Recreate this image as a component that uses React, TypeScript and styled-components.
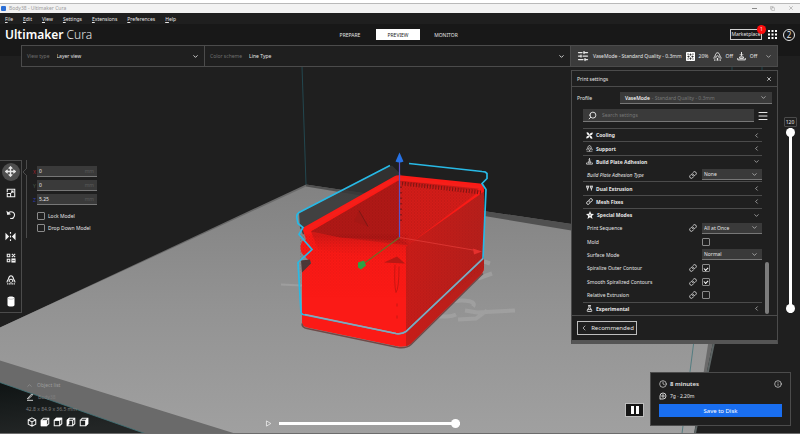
import React, { useState } from "react";
import styled, { createGlobalStyle, css } from "styled-components";
import { ChevronDown, ChevronLeft, ChevronUp, Clock, Copy, FlaskConical, Info, Link, Menu, Move, Search, SlidersHorizontal, X } from "lucide-react";

const c = {
  bg: "#1f1f1f",
  header: "#181818",
  line: "#4b4b4b",
  field: "#3a3a3a",
  fieldLine: "#777777",
  text: "#e6e6e6",
  muted: "#707070",
  blue: "#196ef0",
};

const GlobalStyle = createGlobalStyle`
  * { box-sizing: border-box; }
  body { margin: 0; background: ${c.bg}; }
  body, button, input, select {
    font-family: "Noto Sans", "Open Sans", sans-serif;
    font-size: 5px;
    line-height: 8px;
    color: ${c.text};
  }
  button { background: none; border: 0; padding: 0; margin: 0; cursor: pointer; }
  input, select { margin: 0; min-width: 0; }
  svg { display: block; flex: none; }
`;

const Page = styled.div`
  min-height: 100vh;
  display: flex;
  flex-direction: column;
  background: ${c.bg};
  border-bottom: 1px solid #6c6c6c;
`;

/* window chrome */
const TitleBar = styled.div`
  height: 13px;
  display: flex;
  align-items: center;
  gap: 3px;
  padding: 3px 6px 0 1px;
  background: linear-gradient(#ffffff 3px, #b9b9b9 3px, #b9b9b9 4px, #f2f2f2 4px);
  color: #9b9b9b;
`;
const AppBadge = styled.span`
  width: 5px;
  height: 5px;
  border-radius: 1px;
  background: #2b6fd6;
`;
const WindowButtons = styled.div`
  margin-left: auto;
  display: flex;
  gap: 13px;
  button { color: #8a8a8a; }
`;
const MenuBar = styled.nav`
  height: 11px;
  display: flex;
  align-items: center;
  gap: 10px;
  padding: 0 5px;
  button::first-letter { text-decoration: underline; }
`;
const Header = styled.header`
  display: grid;
  grid-template-columns: 1fr auto 1fr;
  align-items: center;
  height: 32px;
  padding: 0 5px 11px 1px;
  background: ${c.header};
`;
const Brand = styled.div`
  padding-left: 4px;
  font-size: 12px;
  line-height: 16px;
  font-weight: 300;
  strong { font-weight: 600; color: #fff; }
`;
const Tabs = styled.nav`
  display: flex;
  gap: 4px;
`;
const Tab = styled.button<{ $active?: boolean }>`
  width: 44px;
  height: 11px;
  ${(p) => p.$active && css`background: #fff; color: #222;`}
`;
const HeaderTools = styled.div`
  display: flex;
  justify-content: flex-end;
  align-items: center;
  gap: 6px;
`;
const Marketplace = styled.button`
  position: relative;
  height: 11px;
  width: 32px;
  border: 1px solid #d0d0d0;
  line-height: 9px;
  white-space: nowrap;
`;
const Count = styled.span`
  position: absolute;
  top: -5px;
  right: -5px;
  width: 9px;
  height: 9px;
  border-radius: 50%;
  background: #ff0d0d;
`;
const Account = styled.button`
  width: 12px;
  height: 12px;
  border: 1px solid #e6e6e6;
  border-radius: 50%;
  font-size: 8px;
  line-height: 10px;
`;

/* stage */
const Stage = styled.main`
  position: relative;
  flex: 1;
  display: flex;
  flex-direction: column;
`;
const Scene = styled.svg`
  position: absolute;
  inset: 0;
  width: 100%;
  height: 100%;
`;
const StageBar = styled.div`
  position: relative;
  display: flex;
  height: 22px;
  margin: -11px 22px 0 21px;
  border: 1px solid ${c.line};
  background: ${c.bg};
`;
const BarField = styled.label<{ $wide?: boolean }>`
  flex: ${(p) => (p.$wide ? "1" : "0 0 183px")};
  display: flex;
  align-items: center;
  gap: 7px;
  padding: 0 5px;
  color: ${c.muted};
  border-right: 1px solid ${c.line};
  white-space: nowrap;
`;
const PlainSelect = styled.select`
  flex: 1;
  appearance: none;
  border: 0;
  padding: 0;
  background: none;
`;
const Summary = styled.button`
  flex: 0 0 206px;
  display: flex;
  align-items: center;
  gap: 4px;
  padding: 0 5px 0 6px;
  background: #3b3b3b;
  white-space: nowrap;
  svg:last-child { margin-left: auto; }
`;
const Body = styled.div`
  position: relative;
  flex: 1;
  display: flex;
  flex-direction: column;
  justify-content: space-between;
`;
const Row = styled.div`
  display: flex;
  align-items: flex-start;
  padding: 3px 3px 0 0;
`;

/* tools */
const Toolbar = styled.div`
  margin-top: 90px;
  width: 22px;
  height: 153px;
  display: flex;
  flex-direction: column;
  border: 1px solid ${c.line};
  border-left: 0;
  background: ${c.bg};
`;
const Tool = styled.button<{ $active?: boolean }>`
  flex: 1;
  display: grid;
  place-items: center;
  span {
    display: grid;
    place-items: center;
    width: 18px;
    height: 18px;
    border-radius: 50%;
    background: ${(p) => (p.$active ? "#4e4e4e" : "none")};
  }
`;
const ToolPanel = styled.form`
  position: relative;
  margin: 90px 0 0 4px;
  padding: 6px 0 6px 6px;
  border-left: 1px solid ${c.line};
  display: flex;
  flex-direction: column;
  gap: 3px;
`;
const Pointer = styled.svg`
  position: absolute;
  left: -5px;
  top: 8px;
`;
const Axis = styled.label<{ $color: string }>`
  display: flex;
  align-items: center;
  color: ${(p) => p.$color};
  gap: 1px;
  > b { width: 3px; font-weight: 400; }
`;
const AxisField = styled.span`
  display: flex;
  align-items: center;
  width: 60px;
  height: 11px;
  padding: 0 3px 0 2px;
  background: ${c.field};
  border-bottom: 1px solid ${c.fieldLine};
  color: #5a5a5a;
  input { flex: 1; border: 0; padding: 0; background: none; }
`;
const Checks = styled.div`
  display: flex;
  flex-direction: column;
  gap: 4px;
  padding: 4px 0 0 4px;
`;
const CheckLabel = styled.label`
  display: flex;
  align-items: center;
  gap: 3px;
`;
const Check = styled.input`
  appearance: none;
  display: grid;
  place-items: center;
  width: 8px;
  height: 8px;
  border: 1px solid #8a8a8a;
  border-radius: 1px;
  &:checked::after {
    content: "";
    width: 3px;
    height: 2px;
    border: solid #fff;
    border-width: 0 0 1px 1px;
    transform: rotate(-45deg);
  }
`;

/* settings panel */
const Panel = styled.section`
  margin-left: auto;
  width: 207px;
  background: ${c.bg};
  border: 1px solid ${c.line};
  border-bottom: 4px solid #555;
`;
const PanelHead = styled.div`
  display: flex;
  align-items: center;
  justify-content: space-between;
  height: 16px;
  padding: 0 5px;
  border-bottom: 1px solid ${c.line};
`;
const ProfileRow = styled.div`
  display: flex;
  align-items: center;
  justify-content: space-between;
  padding: 5px 5px 0;
`;
const ProfileButton = styled.button`
  display: flex;
  align-items: center;
  width: 152px;
  height: 12px;
  padding: 0 5px;
  background: ${c.field};
  border-bottom: 1px solid ${c.fieldLine};
  color: #777;
  b { font-weight: 500; color: #fff; margin-right: 2px; }
  svg { margin-left: auto; color: ${c.text}; }
`;
const SearchRow = styled.div`
  display: flex;
  align-items: center;
  gap: 3px;
  padding: 5px 8px 6px 11px;
`;
const SearchBox = styled.label`
  flex: 1;
  display: flex;
  align-items: center;
  gap: 5px;
  height: 13px;
  padding: 0 5px;
  background: ${c.field};
  border-bottom: 1px solid ${c.fieldLine};
  svg { transform: scaleX(-1); }
  input { flex: 1; border: 0; padding: 0; background: none; outline: 0; }
  input::placeholder { color: #777; }
`;
const ListArea = styled.div`
  display: flex;
  justify-content: space-between;
  padding: 0 8px 0 11px;
`;
const List = styled.div`
  width: 179px;
  height: 187px;
  display: grid;
  grid-auto-rows: 1fr;
`;
const ScrollThumb = styled.div`
  align-self: flex-end;
  width: 4px;
  height: 52px;
  margin-bottom: 1px;
  border-radius: 2px;
  background: #7c7c7c;
`;
const Category = styled.button`
  display: flex;
  align-items: center;
  gap: 3px;
  padding: 0 2px 0 3px;
  border-top: 1px solid ${c.line};
  font-weight: 700;
  text-align: left;
  svg:last-child { margin-left: auto; }
`;
const Setting = styled.div<{ $italic?: boolean }>`
  display: grid;
  grid-template-columns: 1fr 9px 60px;
  column-gap: 4px;
  align-items: center;
  padding-left: 4px;
  font-style: ${(p) => (p.$italic ? "italic" : "normal")};
`;
const Control = styled.div`
  grid-column: 3;
`;
const SelectWrap = styled.div`
  display: grid;
  align-items: center;
  height: 11px;
  background: ${c.field};
  border-bottom: 1px solid ${c.fieldLine};
  select {
    grid-area: 1 / 1;
    appearance: none;
    border: 0;
    padding: 0 12px 0 2px;
    background: none;
  }
  svg { grid-area: 1 / 1; justify-self: end; margin-right: 4px; pointer-events: none; }
`;
const PanelFoot = styled.div`
  padding: 5px;
  border-top: 1px solid ${c.line};
`;
const Recommended = styled.button`
  display: flex;
  align-items: center;
  justify-content: center;
  gap: 3px;
  width: 60px;
  height: 14px;
  border: 1px solid #bdbdbd;
  font-size: 6px;
`;

/* layer slider */
const LayerColumn = styled.div`
  width: 14px;
  margin: 47px 0 0 5px;
  display: flex;
  flex-direction: column;
  align-items: center;
  gap: 1px;
`;
const LayerValue = styled.output`
  width: 13px;
  height: 10px;
  border: 1px solid ${c.line};
  border-radius: 1px;
  text-align: center;
  background: ${c.bg};
`;
const thumb = css`
  appearance: none;
  width: 9px;
  height: 9px;
  border: 0;
  border-radius: 50%;
  background: #fff;
  pointer-events: auto;
`;
const DoubleRange = styled.div`
  display: grid;
  width: 9px;
  height: 185px;
  background: linear-gradient(#fff, #fff) center / 3px 100% no-repeat;
`;
const VerticalRange = styled.input`
  grid-area: 1 / 1;
  appearance: none;
  writing-mode: vertical-lr;
  direction: rtl;
  width: 9px;
  height: 185px;
  background: none;
  pointer-events: none;
  &::-webkit-slider-thumb { ${thumb} }
`;

/* bottom */
const BottomRow = styled.div`
  display: flex;
  align-items: flex-end;
  padding: 0 9px 7px 26px;
`;
const ObjectInfo = styled.div`
  width: 239px;
  display: flex;
  flex-direction: column;
  align-items: flex-start;
  gap: 4px;
  margin-bottom: -1px;
  color: #9c9c9c;
  button { display: flex; align-items: center; gap: 4px; color: inherit; }
`;
const Faded = styled.span`
  color: #7e7e7e;
`;
const Views = styled.div`
  display: flex;
  gap: 3px;
  padding: 0 1px;
`;
const Simulation = styled.div`
  flex: 0 1 195px;
  display: flex;
  align-items: center;
  gap: 7px;
  margin-bottom: -2px;
`;
const PathRange = styled.input`
  flex: 1;
  appearance: none;
  height: 9px;
  background: linear-gradient(#fff, #fff) center / 100% 3px no-repeat;
  &::-webkit-slider-thumb { ${thumb} }
`;
const Pause = styled.button`
  display: grid;
  place-items: center;
  width: 19px;
  height: 14px;
  margin: 0 6px 9px auto;
  background: #161616;
  border: 1px solid #bdbdbd;
`;
const SaveCard = styled.section`
  width: 141px;
  padding: 5px 8px 8px;
  border: 1px solid ${c.line};
  background: ${c.bg};
`;
const Stat = styled.div`
  display: flex;
  align-items: center;
  gap: 3px;
  height: 12px;
  b { font-weight: 600; font-size: 6px; }
  button { margin-left: auto; }
`;
const Save = styled.button`
  width: 100%;
  height: 13px;
  margin-top: 2px;
  background: ${c.blue};
  color: #fff;
  font-size: 6px;
`;

type GlyphProps = { size?: number };
const Glyph = ({ size = 9, children }: React.PropsWithChildren<GlyphProps>) => (
  <svg width={size} height={size} viewBox="0 0 24 24" fill="none" stroke="#f2f2f2" strokeWidth="2.5" aria-hidden="true">
    {children}
  </svg>
);
const SupportGlyph = (p: GlyphProps) => (
  <Glyph {...p}>
    <path d="M3 18c-2-3 2-5 3-9 1-4 3-7 6-7s5 3 6 7c1 4 5 6 3 9M8 17c-1-3 0-7 4-7s5 4 4 7" />
    <path d="M4 23v-3M8 23v-3M12 23v-7M16 23v-3M20 23v-3" />
  </Glyph>
);
const AdhesionGlyph = (p: GlyphProps) => (
  <Glyph {...p}>
    <path d="M12 0v9M8 6l4 4 4-4M7 13h10v4H7zM2 16v5h20v-5" />
  </Glyph>
);
const InfillGlyph = () => (
  <svg width="9" height="9" viewBox="0 0 24 24" aria-hidden="true">
    <rect x="0" y="0" width="24" height="24" rx="2" fill="#fff" />
    <path d="M12 3l3 4-3 3-3-3zM12 21l3-4-3-3-3 3zM3 12l4-3 3 3-3 3zM21 12l-4-3-3 3 3 3zM4 4h3v3H4zM17 4h3v3h-3zM4 17h3v3H4zM17 17h3v3h-3z" fill="#333" />
  </svg>
);
const FanGlyph = () => (
  <svg width="7" height="7" viewBox="0 0 24 24" fill="#f2f2f2" aria-hidden="true">
    <path d="M12 12C5 12 2 7 2 1c7-1 10 4 10 11zm0 0c0-7 5-10 11-10 1 7-4 10-11 10zm0 0c7 0 10 5 10 11-7 1-10-4-10-11zm0 0c0 7-5 10-11 10-1-7 4-10 11-10z" />
  </svg>
);
const ExtruderGlyph = () => (
  <Glyph size={7}>
    <path d="M0 4h11M13 4h11M3 4v7h5V4M16 4v7h5V4M5.500 11v8M18.500 11v8" strokeWidth="3" />
  </Glyph>
);
const StarGlyph = () => (
  <svg width="8" height="8" viewBox="0 0 24 24" fill="#f2f2f2" aria-hidden="true">
    <path fillRule="evenodd" d="M12 0l3.500 8 8.500 1-6.500 6 2 9L12 19l-7.500 5 2-9L0 9l8.500-1zM12 10l-2 2 2 3 2-3z" />
  </svg>
);
const ScaleGlyph = () => (
  <Glyph size={10}>
    <path d="M9 3H21V21H12M3 13h8v8H3zM3 10V3h6M12 12l5-5M12 7h5v5" />
  </Glyph>
);
const RotateGlyph = () => (
  <Glyph size={10}>
    <path d="M5 9a8 8 0 1 1 5 11" />
    <path d="M1 2l2 10 9-2z" fill="#f2f2f2" stroke="none" />
  </Glyph>
);
const MirrorGlyph = () => (
  <Glyph size={11}>
    <path d="M1 4v16l8-8zM23 4v16l-8-8z" fill="#f2f2f2" stroke="none" />
    <path d="M12 2v4M12 10v4M12 18v4" />
  </Glyph>
);
const PerModelGlyph = () => (
  <Glyph size={10}>
    <path d="M3 3h6v6H3zM3 15h6v6H3zM14 2l8 8M22 2l-8 8" />
    <path d="M13 13h10v10H13z" fill="#f2f2f2" stroke="none" />
    <path d="M15 18h6" stroke="#333" strokeWidth="1.500" />
  </Glyph>
);
const CylinderGlyph = () => (
  <svg width="8" height="11" viewBox="0 0 16 22" fill="#fff" aria-hidden="true">
    <path d="M1 4c0-4 14-4 14 0v14c0 4-14 4-14 0z" />
    <path d="M1.500 4.500c2 2.500 11 2.500 13 0" fill="none" stroke="#888" />
  </svg>
);
const AppsGlyph = () => (
  <svg width="9" height="9" viewBox="0 0 9 9" fill="#fff" aria-hidden="true">
    {[0, 3.5, 7].flatMap((y) => [0, 3.5, 7].map((x) => <rect key={`${x}-${y}`} x={x} y={y} width="2" height="2" />))}
  </svg>
);
const MaterialGlyph = () => (
  <Glyph size={8}>
    <path d="M3 22V12a9 9 0 1 1 9 9H3" />
    <circle cx="12" cy="12" r="3.500" />
  </Glyph>
);
const cubeFaces = ["", "M2 8h14v14H2z", "M2 9l6-7h14l-6 7z", "M2 7l6-5v14l-6 6z", "M16 8l6-6v14l-6 6z"];
const CubeGlyph = ({ view }: { view: number }) => (
  <Glyph size={10}>
    {view === 0 ? (
      <path d="M12 2l9 5v10l-9 5-9-5V7zM3 7l9 5 9-5M12 12v10" />
    ) : (
      <>
        <path d="M3 8h13v13H3zM3 8l5-5h13v13l-5 5M16 8l5-5" />
        <path d={cubeFaces[view]} fill="#fff" stroke="none" />
      </>
    )}
  </Glyph>
);

const tools = [
  ["Move", <Move size={11} strokeWidth={3} />],
  ["Scale", <ScaleGlyph />],
  ["Rotate", <RotateGlyph />],
  ["Mirror", <MirrorGlyph />],
  ["Per model settings", <PerModelGlyph />],
  ["Support blocker", <SupportGlyph size={10} />],
  ["Cylinder", <CylinderGlyph />],
] as const;

type Entry =
  | { kind: "category"; name: string; icon: React.ReactNode; open?: boolean }
  | { kind: "select"; name: string; value: string; linked?: boolean; italic?: boolean }
  | { kind: "check"; name: string; checked: boolean; linked?: boolean };

const entries: Entry[] = [
  { kind: "category", name: "Cooling", icon: <FanGlyph /> },
  { kind: "category", name: "Support", icon: <SupportGlyph size={7} /> },
  { kind: "category", name: "Build Plate Adhesion", icon: <AdhesionGlyph size={7} />, open: true },
  { kind: "select", name: "Build Plate Adhesion Type", value: "None", linked: true, italic: true },
  { kind: "category", name: "Dual Extrusion", icon: <ExtruderGlyph /> },
  { kind: "category", name: "Mesh Fixes", icon: <Link size={7} strokeWidth={3} /> },
  { kind: "category", name: "Special Modes", icon: <StarGlyph />, open: true },
  { kind: "select", name: "Print Sequence", value: "All at Once", linked: true },
  { kind: "check", name: "Mold", checked: false },
  { kind: "select", name: "Surface Mode", value: "Normal" },
  { kind: "check", name: "Spiralize Outer Contour", checked: true, linked: true },
  { kind: "check", name: "Smooth Spiralized Contours", checked: true, linked: true },
  { kind: "check", name: "Relative Extrusion", checked: false, linked: true },
  { kind: "category", name: "Experimental", icon: <FlaskConical size={7} strokeWidth={3} /> },
];

const EntryRow = ({ entry }: { entry: Entry }) => {
  if (entry.kind === "category") {
    return (
      <Category aria-expanded={!!entry.open}>
        {entry.icon}
        {entry.name}
        {entry.open ? <ChevronDown size={7} /> : <ChevronLeft size={7} />}
      </Category>
    );
  }
  const id = entry.name.toLowerCase().replace(/ /g, "-");
  return (
    <Setting $italic={entry.kind === "select" && entry.italic}>
      <label htmlFor={id}>{entry.name}</label>
      {entry.linked && <Link size={8} strokeWidth={2.5} />}
      <Control>
        {entry.kind === "select" ? (
          <SelectWrap>
            <select id={id}>
              <option>{entry.value}</option>
            </select>
            <ChevronDown size={7} />
          </SelectWrap>
        ) : (
          <Check id={id} type="checkbox" defaultChecked={entry.checked} />
        )}
      </Control>
    </Setting>
  );
};

const PrintScene = () => (
  <Scene viewBox="0 56 800 378" preserveAspectRatio="xMidYMid slice" aria-hidden="true">
    <defs>
      <linearGradient id="plate" x1="0" y1="0" x2="0" y2="1">
        <stop offset="0" stopColor="#828282" />
        <stop offset="0.500" stopColor="#939393" />
        <stop offset="1" stopColor="#a0a0a0" />
      </linearGradient>
      <linearGradient id="under" x1="0" y1="0" x2="0.300" y2="1">
        <stop offset="0" stopColor="#0f1414" />
        <stop offset="1" stopColor="#232626" />
      </linearGradient>
      <linearGradient id="side" x1="0" y1="0" x2="1" y2="0.300">
        <stop offset="0" stopColor="#cc1c18" />
        <stop offset="1" stopColor="#b51f1b" />
      </linearGradient>
      <pattern id="mesh" width="3" height="3" patternUnits="userSpaceOnUse">
        <path d="M0 0h1v1H0zM1.500 1.500h1v1h-1z" fill="#7c0c0a" opacity="0.350" />
      </pattern>
      <linearGradient id="fadeDown" x1="0" y1="0" x2="0" y2="1">
        <stop offset="0" stopColor="#fff" />
        <stop offset="1" stopColor="#000" />
      </linearGradient>
      <linearGradient id="frontRim" x1="0" y1="0" x2="0" y2="1">
        <stop offset="0" stopColor="#b51916" stopOpacity="0.700" />
        <stop offset="1" stopColor="#fb1a16" stopOpacity="0" />
      </linearGradient>
      <mask id="frontFade">
        <path d="M300 235h108v65H300z" fill="url(#fadeDown)" />
      </mask>
    </defs>
    <path d="M0 383L145 434H0z" fill="url(#under)" />
    <path d="M0 328L306 185 722 247V300L694 434H145L0 383z" fill="#6a6a6a" />
    <path d="M306 185L722 247V256L306 191z" fill="#505050" />
    <path d="M0 328L306 187 722 256 694 434H235L0 361z" fill="url(#plate)" />
    <path d="M722 270L714 343 695 434" fill="none" stroke="#5c6464" strokeWidth="2" />
    <path d="M698 310L690 372 682 434M0 383L145 434" fill="none" stroke="#41757a" strokeWidth="0.800" />
    <path d="M302 67L306 185M732 67v5M762 67v5" fill="none" stroke="#23505a" strokeWidth="0.800" />
    <g fill="none" stroke="#a8a8a8" strokeWidth="4" opacity="0.600">
      <path d="M448 303c10-3 30-3 25 4M436 316c6 2 16 1 20-1M458 320l18-1 11-8M465 311l12 2 38-2M478 279l14-5M484 262l6 2" />
      <path d="M281 285l21 1" strokeWidth="2" />
    </g>
    <path d="M299 213L392 166 402 176 303 235 300 228z" fill="#353535" opacity="0.850" />
    <path d="M303 231Q302 228 307 226L394 177Q397 175 402 176L480 184Q484 185 484 190V268Q484 272 480 276L411 344Q407 348 398 347L307 328Q302 327 302 323V272L311 263 302 254Q299 248 302 242L306 240z" fill="#fb1a16" />
    <path d="M301 261l9-1 1 4-9 9z" fill="#4b3a3a" />
    <path d="M302 324q0 4 5 5l91 19q9 1 13-3l72-71" fill="none" stroke="#6f4a48" strokeWidth="1.500" />
    <path d="M406 247L484 192V268Q484 272 480 276L411 344 406 347z" fill="url(#side)" />
    <path d="M406 247L484 192V268L406 332z" fill="url(#mesh)" opacity="0.550" />
    <path d="M311 232L398 181 480 188 408 246 340 238z" fill="#c81a17" />
    <path d="M311 232L399 181V241L340 238z" fill="#b01916" />
    <path d="M400 184L481 191 409 245 400 240z" fill="#d41d19" />
    <path d="M311 232L399 181 481 190 409 245 340 238z" fill="url(#mesh)" />
    <path d="M311 232L340 238 406 244V262L318 250z" fill="url(#frontRim)" />
    <path d="M300 230H408V300H300z" fill="url(#mesh)" mask="url(#frontFade)" />
    <path d="M354 222L359 211 368 227z" fill="#a51815" />
    <path d="M359 211L368 227" stroke="#7d1714" strokeWidth="1" />
    <path d="M309 229L396 179 482 188" fill="none" stroke="#f51f1a" strokeWidth="3" />
    <path d="M402 184L481 193" fill="none" stroke="#7d1512" strokeWidth="4" strokeDasharray="1 1.800" />
    <path d="M384 263l13-6 8 7z" fill="#b81814" />
    <path d="M395 265q-1 20 1 28q3-4 3-26M397 304v3M397 316v3" fill="none" stroke="#c81612" strokeWidth="1" />
    <path d="M401 187v35" fill="none" stroke="#7c1512" strokeWidth="1.500" strokeDasharray="1.500 4" />
    <path d="M400 238L476 251" stroke="#e23a36" strokeWidth="0.800" />
    <path d="M473 249l9 3-8 3z" fill="#e5302d" />
    <path d="M390 166L299 213Q296 215 297 219L298 224 303 228 299 235 312 250 298 263 301 313Q301 314 303 315L396 334Q402 335 406 332L483 259 486 190 482 184 487 179V174Q486 172 482 172L409 164" fill="none" stroke="#28b9e5" strokeWidth="1.700" />
    <path d="M305 315L396 334Q402 335 406 332L483 259" fill="none" stroke="#8fa5b5" strokeWidth="1.300" />
    <path d="M399.500 162V238" stroke="#5b53c8" strokeWidth="1.200" />
    <path d="M399.500 153L403.500 162q-4 2-8 0z" fill="#2672e6" />
    <path d="M399.500 238L364 264" stroke="#6f6b25" strokeWidth="1.200" />
    <path d="M358 263l6-2 2 5-5 4-3-2z" fill="#2ba344" />
  </Scene>
);

export default function App() {
  const [top, setTop] = useState(120);
  return (
    <Page>
      <GlobalStyle />
      <TitleBar>
        <AppBadge />
        Body38 - Ultimaker Cura
        <WindowButtons>
          <button aria-label="Minimize"><svg width="5" height="5"><path d="M0 2.500h5" stroke="currentColor" /></svg></button>
          <button aria-label="Restore"><Copy size={5} /></button>
          <button aria-label="Close"><X size={6} /></button>
        </WindowButtons>
      </TitleBar>
      <MenuBar>
        {["File", "Edit", "View", "Settings", "Extensions", "Preferences", "Help"].map((m) => (
          <button key={m}>{m}</button>
        ))}
      </MenuBar>
      <Header>
        <Brand><strong>Ultimaker</strong> Cura</Brand>
        <Tabs>
          <Tab>PREPARE</Tab>
          <Tab $active>PREVIEW</Tab>
          <Tab>MONITOR</Tab>
        </Tabs>
        <HeaderTools>
          <Marketplace>Marketplace<Count>1</Count></Marketplace>
          <button aria-label="Applications"><AppsGlyph /></button>
          <Account aria-label="Account">2</Account>
        </HeaderTools>
      </Header>
      <Stage>
        <PrintScene />
        <StageBar>
          <BarField>
            View type
            <PlainSelect><option>Layer view</option></PlainSelect>
            <ChevronDown size={7} color={c.text} strokeWidth={3} />
          </BarField>
          <BarField $wide>
            Color scheme
            <PlainSelect><option>Line Type</option></PlainSelect>
            <ChevronDown size={7} color={c.text} strokeWidth={3} />
          </BarField>
          <Summary>
            <SlidersHorizontal size={12} strokeWidth={2.5} />
            VaseMode - Standard Quality - 0.3mm
            <InfillGlyph /> 20%
            <SupportGlyph /> Off
            <AdhesionGlyph /> Off
            <ChevronDown size={7} />
          </Summary>
        </StageBar>
        <Body>
          <Row>
            <Toolbar>
              {tools.map(([name, icon], i) => (
                <Tool key={name} aria-label={name} $active={i === 0}><span>{icon}</span></Tool>
              ))}
            </Toolbar>
            <ToolPanel>
              <Pointer width="5" height="8"><path d="M5 0L1 4l4 4" fill={c.bg} stroke={c.line} /></Pointer>
              <Axis $color="#a3222c"><b>X</b><AxisField><input defaultValue="0" />mm</AxisField></Axis>
              <Axis $color="#4a5a4a"><b>Y</b><AxisField><input defaultValue="0" />mm</AxisField></Axis>
              <Axis $color="#2d3bb0"><b>Z</b><AxisField><input defaultValue="5.25" />mm</AxisField></Axis>
              <Checks>
                <CheckLabel><Check type="checkbox" />Lock Model</CheckLabel>
                <CheckLabel><Check type="checkbox" />Drop Down Model</CheckLabel>
              </Checks>
            </ToolPanel>
            <Panel>
              <PanelHead>Print settings<button aria-label="Close"><X size={6} strokeWidth={3} /></button></PanelHead>
              <ProfileRow>
                Profile
                <ProfileButton aria-haspopup="listbox"><b>VaseMode</b> - Standard Quality - 0.3mm<ChevronDown size={7} /></ProfileButton>
              </ProfileRow>
              <SearchRow>
                <SearchBox>
                  <Search size={9} strokeWidth={2.5} />
                  <input placeholder="Search settings" aria-label="Search settings" />
                </SearchBox>
                <button aria-label="Setting visibility"><Menu size={12} /></button>
              </SearchRow>
              <ListArea>
                <List>{entries.map((e) => <EntryRow key={e.name} entry={e} />)}</List>
                <ScrollThumb />
              </ListArea>
              <PanelFoot>
                <Recommended><ChevronLeft size={8} />Recommended</Recommended>
              </PanelFoot>
            </Panel>
            <LayerColumn>
              <LayerValue>{top}</LayerValue>
              <DoubleRange>
                <VerticalRange type="range" aria-label="Top layer" min={0} max={120} value={top} onChange={(e) => setTop(+e.target.value)} />
                <VerticalRange type="range" aria-label="Bottom layer" min={0} max={120} defaultValue={0} />
              </DoubleRange>
            </LayerColumn>
          </Row>
          <BottomRow>
            <ObjectInfo>
              <button><ChevronUp size={7} />Object list</button>
              <button aria-label="Rename">
                <Glyph size={8}><path d="M4 17L17 3l3 3L8 17zM3 22h18" /></Glyph>
                <Faded>Body38</Faded>
              </button>
              <Faded>42.8 x 84.9 x 36.5 mm</Faded>
              <Views>
                {["3D view", "Front view", "Top view", "Left view", "Right view"].map((v, i) => (
                  <button key={v} aria-label={v}><CubeGlyph view={i} /></button>
                ))}
              </Views>
            </ObjectInfo>
            <Simulation>
              <button aria-label="Play"><Glyph size={7}><path d="M5 3l15 9-15 9z" /></Glyph></button>
              <PathRange type="range" aria-label="Path position" defaultValue={100} />
            </Simulation>
            <Pause aria-label="Pause">
              <svg width="8" height="8" fill="#fff"><path d="M0 0h3v8H0zM5 0h3v8H5z" /></svg>
            </Pause>
            <SaveCard>
              <Stat><Clock size={8} /><b>8 minutes</b><button aria-label="Details"><Info size={8} /></button></Stat>
              <Stat><MaterialGlyph />7g · 2.20m</Stat>
              <Save>Save to Disk</Save>
            </SaveCard>
          </BottomRow>
        </Body>
      </Stage>
    </Page>
  );
}
